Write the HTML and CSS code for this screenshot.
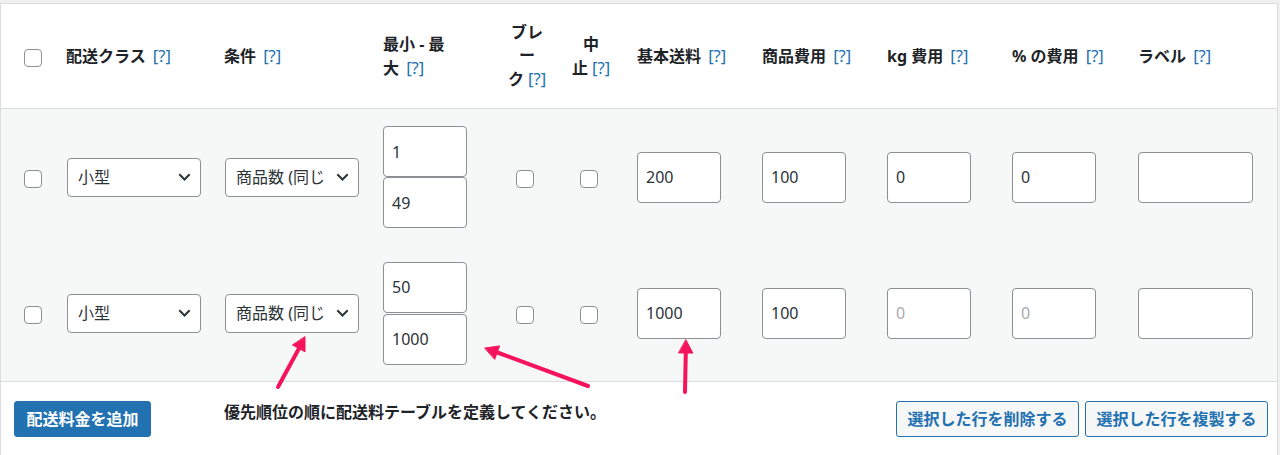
FILE: index.html
```html
<!DOCTYPE html>
<html lang="ja">
<head>
<meta charset="utf-8">
<title>配送料テーブル</title>
<link rel="stylesheet" href="styles.css">
</head>
<body>
<div class="page">
  <div class="rates">
    <div class="grid head">
      <div class="col-check"><input class="cb" type="checkbox"></div>
      <div class="col-class">配送クラス <span class="tip">[?]</span></div>
      <div class="col-cond">条件 <span class="tip">[?]</span></div>
      <div class="col-minmax">最小 - 最<br>大 <span class="tip">[?]</span></div>
      <div class="col-break">ブレ<br>ー<br>ク <span class="tip tip-tight">[?]</span></div>
      <div class="col-stop">中<br>止 <span class="tip tip-tight">[?]</span></div>
      <div class="col-fee">基本送料 <span class="tip">[?]</span></div>
      <div class="col-fee">商品費用 <span class="tip">[?]</span></div>
      <div class="col-fee">kg 費用 <span class="tip">[?]</span></div>
      <div class="col-fee">% の費用 <span class="tip">[?]</span></div>
      <div class="col-label">ラベル <span class="tip">[?]</span></div>
    </div>

    <div class="grid row">
      <div class="col-check"><input class="cb" type="checkbox"></div>
      <div class="col-class">
        <div class="sel"><span class="sel-text">小型</span><svg viewBox="0 0 13 8" width="13" height="8"><polyline points="1.3,1.3 6.5,6.5 11.7,1.3" fill="none" stroke="#2c3338" stroke-width="2"/></svg></div>
      </div>
      <div class="col-cond">
        <div class="sel"><span class="sel-text">商品数 (同じクラス)</span><svg viewBox="0 0 13 8" width="13" height="8"><polyline points="1.3,1.3 6.5,6.5 11.7,1.3" fill="none" stroke="#2c3338" stroke-width="2"/></svg></div>
      </div>
      <div class="col-minmax">
        <input class="inp" type="text" value="1">
        <input class="inp" type="text" value="49">
      </div>
      <div class="col-break"><input class="cb cb-break" type="checkbox"></div>
      <div class="col-stop"><input class="cb cb-stop" type="checkbox"></div>
      <div class="col-fee"><input class="inp" type="text" value="200"></div>
      <div class="col-fee"><input class="inp" type="text" value="100"></div>
      <div class="col-fee"><input class="inp" type="text" value="0"></div>
      <div class="col-fee"><input class="inp" type="text" value="0"></div>
      <div class="col-label"><input class="inp inp-label" type="text" value=""></div>
    </div>

    <div class="grid row">
      <div class="col-check"><input class="cb" type="checkbox"></div>
      <div class="col-class">
        <div class="sel"><span class="sel-text">小型</span><svg viewBox="0 0 13 8" width="13" height="8"><polyline points="1.3,1.3 6.5,6.5 11.7,1.3" fill="none" stroke="#2c3338" stroke-width="2"/></svg></div>
      </div>
      <div class="col-cond">
        <div class="sel"><span class="sel-text">商品数 (同じクラス)</span><svg viewBox="0 0 13 8" width="13" height="8"><polyline points="1.3,1.3 6.5,6.5 11.7,1.3" fill="none" stroke="#2c3338" stroke-width="2"/></svg></div>
      </div>
      <div class="col-minmax">
        <input class="inp" type="text" value="50">
        <input class="inp inp-gap" type="text" value="1000">
      </div>
      <div class="col-break"><input class="cb cb-break" type="checkbox"></div>
      <div class="col-stop"><input class="cb cb-stop" type="checkbox"></div>
      <div class="col-fee"><input class="inp" type="text" value="1000"></div>
      <div class="col-fee"><input class="inp" type="text" value="100"></div>
      <div class="col-fee"><input class="inp" type="text" placeholder="0"></div>
      <div class="col-fee"><input class="inp" type="text" placeholder="0"></div>
      <div class="col-label"><input class="inp inp-label" type="text" value=""></div>
    </div>

    <div class="foot">
      <div class="foot-add"><button class="btn btn-primary" type="button">配送料金を追加</button></div>
      <div class="foot-note">優先順位の順に配送料テーブルを定義してください。</div>
      <div class="foot-actions">
        <button class="btn btn-secondary" type="button">選択した行を削除する</button>
        <button class="btn btn-secondary" type="button">選択した行を複製する</button>
      </div>
    </div>
  </div>

  <svg class="arrows" viewBox="0 0 1280 455" width="1280" height="455">
    <g stroke="#f5145c" stroke-width="4" stroke-linecap="round" fill="#f5145c">
      <line x1="278" y1="387" x2="299.5" y2="347.5"/>
      <polygon points="305,337 305,351.8 292.7,345.1" stroke-width="1" stroke-linejoin="round"/>
      <line x1="588" y1="386" x2="496" y2="352"/>
      <polygon points="485,348 499.6,345.9 494.8,359.1" stroke-width="1" stroke-linejoin="round"/>
      <line x1="685" y1="392" x2="685.8" y2="352"/>
      <polygon points="686,340 692.8,353.1 678.8,352.9" stroke-width="1" stroke-linejoin="round"/>
    </g>
  </svg>
</div>
</body>
</html>
```

FILE: styles.css
```css
* {
  box-sizing: border-box;
}

html,
body {
  margin: 0;
  padding: 0;
}

body {
  width: 1280px;
  height: 455px;
  overflow: hidden;
  background: #f0f0f1;
  font-family: "Noto Sans", "Noto Sans CJK JP", sans-serif;
  font-size: 16px;
  color: #1d2327;
}

.page {
  position: relative;
  height: 455px;
  padding-top: 3px;
}

.rates {
  width: 1278px;
  border: 1px solid #dcdcde;
  background: #fff;
}

.grid {
  display: grid;
  grid-template-columns: 65px 158px 159px 116px 56px 72px 125px 125px 125px 126px 149px;
  align-items: center;
}

.head {
  height: 105px;
  border-bottom: 1px solid #dcdcde;
  background: #fff;
  font-weight: 700;
  line-height: 23px;
  white-space: nowrap;
}

.tip {
  margin-left: 3px;
  font-weight: 400;
  font-size: 16.5px;
  color: #2271b1;
}

.tip-tight {
  margin-left: 0;
}

.row {
  height: 136px;
  background: #f6f7f7;
}

.col-check {
  padding-left: 23px;
}

.col-break {
  padding: 0 8px;
  text-align: center;
}

.col-stop {
  text-align: center;
}

.col-fee,
.col-label {
  padding-left: 10px;
}

.cb {
  -webkit-appearance: none;
  appearance: none;
  display: block;
  width: 18px;
  height: 18px;
  margin: 4px 0 0 0;
  border: 1px solid #8c8f94;
  border-radius: 4px;
  background: #fff;
}

.cb-break {
  margin-left: 9px;
}

.cb-stop {
  margin-left: 25px;
}

.sel {
  display: flex;
  align-items: center;
  width: 134px;
  height: 39px;
  margin-left: 1px;
  padding: 0 9px 0 10px;
  border: 1px solid #8c8f94;
  border-radius: 4px;
  background: #fff;
  color: #2c3338;
  line-height: 22px;
}

.sel-text {
  flex: 1;
  min-width: 0;
  overflow: hidden;
  white-space: nowrap;
  margin-right: 10px;
}

.sel svg {
  flex: none;
  display: block;
}

.inp {
  display: block;
  width: 84px;
  height: 51px;
  margin: 0;
  padding: 0 8px;
  border: 1px solid #8c8f94;
  border-radius: 4px;
  background: #fff;
  font-family: "Noto Sans", "Noto Sans CJK JP", sans-serif;
  font-size: 16px;
  color: #2c3338;
  outline: none;
}

.inp-gap {
  margin-top: 1px;
}

.inp::placeholder {
  color: #a7aaad;
}

.inp-label {
  width: 115px;
}

.foot {
  display: flex;
  align-items: flex-start;
  height: 90px;
  padding-top: 19px;
  border-top: 1px solid #dcdcde;
  background: #fff;
}

.foot-add {
  flex: none;
  width: 223px;
  padding-left: 13px;
}

.foot-note {
  flex: 1;
  font-weight: 700;
  line-height: 22px;
  white-space: nowrap;
}

.foot-actions {
  display: flex;
  gap: 6px;
  padding-right: 9px;
}

.btn {
  display: block;
  height: 36px;
  margin: 0;
  border-radius: 3px;
  font-family: "Noto Sans", "Noto Sans CJK JP", sans-serif;
  font-size: 16px;
  font-weight: 700;
  line-height: 34px;
  white-space: nowrap;
  cursor: pointer;
}

.btn-primary {
  padding: 0 11.5px;
  border: 1px solid #2271b1;
  background: #2271b1;
  color: #fff;
}

.btn-secondary {
  padding: 0 10.5px;
  border: 1px solid #2271b1;
  background: #f6f7f7;
  color: #2271b1;
}

.arrows {
  position: absolute;
  top: 0;
  left: 0;
  pointer-events: none;
}
```
